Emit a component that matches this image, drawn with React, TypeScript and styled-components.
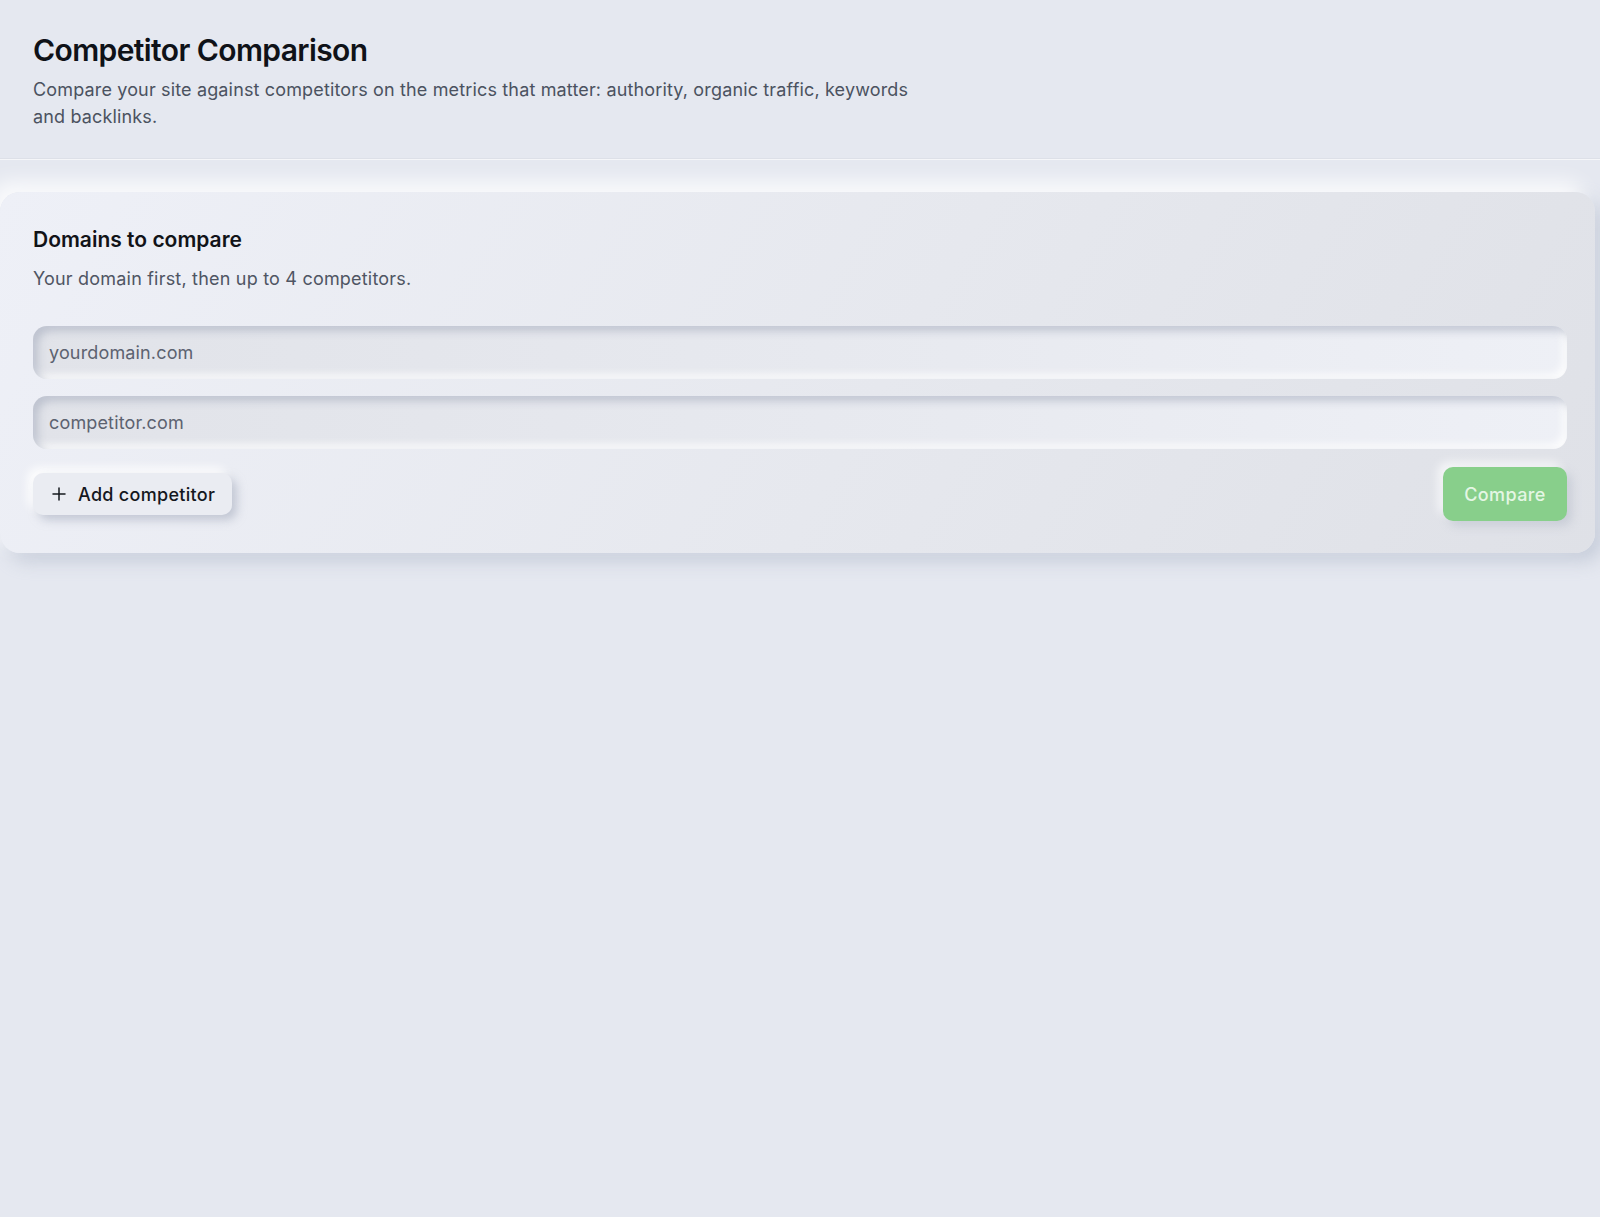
import styled, { createGlobalStyle } from "styled-components";

const GlobalStyle = createGlobalStyle`
  html, body {
    margin: 0;
    padding: 0;
    background: #e5e8f0;
    font-family: Inter, "Noto Sans", "Liberation Sans", sans-serif;
    color: #111827;
  }
  * {
    box-sizing: border-box;
  }
`;

const Plus = () => (
  <svg width="18" height="18" viewBox="0 0 24 24" fill="none" stroke="currentColor" strokeWidth="2" strokeLinecap="round">
    <path d="M12 4v16M4 12h16" />
  </svg>
);

export default function App() {
  return (
    <>
      <GlobalStyle />
      <Page>
        <Header>
          <Title>Competitor Comparison</Title>
          <Lead>
            Compare your site against competitors on the metrics that matter: authority, organic traffic, keywords
            and backlinks.
          </Lead>
        </Header>
        <Main>
          <Card>
            <CardTitle>Domains to compare</CardTitle>
            <CardText>Your domain first, then up to 4 competitors.</CardText>
            <Fields>
              <Field placeholder="yourdomain.com" />
              <Field placeholder="competitor.com" />
            </Fields>
            <Actions>
              <AddButton type="button">
                <Plus />
                Add competitor
              </AddButton>
              <CompareButton type="button" disabled>
                Compare
              </CompareButton>
            </Actions>
          </Card>
        </Main>
      </Page>
    </>
  );
}

const Page = styled.div`
  min-height: 1217px;
  background: #e5e8f0;
`;

const Header = styled.header`
  padding: 31px 32px 28px 33px;
  border-bottom: 1px solid #dde0e8;
  box-shadow: 0 1px 0 rgba(255, 255, 255, 0.6);
`;

const Title = styled.h1`
  margin: 0 0 7px;
  font-size: 30px;
  line-height: 38px;
  font-weight: 600;
  letter-spacing: -0.6px;
  color: #0f1218;
`;

const Lead = styled.p`
  margin: 0;
  max-width: 905px;
  font-size: 18px;
  line-height: 27px;
  letter-spacing: 0.15px;
  color: #4b5260;
`;

const Main = styled.main`
  padding: 33px 5px 32px 0;
`;

const Card = styled.section`
  padding: 33px 28px 32px 33px;
  border-radius: 20px;
  background: linear-gradient(120deg, #eef0f7 0%, #e6e8ee 55%, #dfe1e7 100%);
  box-shadow:
    -10px -10px 20px rgba(255, 255, 255, 0.85),
    8px 8px 18px rgba(160, 170, 190, 0.45);
`;

const CardTitle = styled.h2`
  margin: 0;
  font-size: 21px;
  line-height: 30px;
  font-weight: 600;
  color: #111318;
`;

const CardText = styled.p`
  margin: 11px 0 0;
  font-size: 18px;
  line-height: 26px;
  letter-spacing: 0.2px;
  color: #4f5563;
`;

const Fields = styled.div`
  display: flex;
  flex-direction: column;
  gap: 17px;
  margin-top: 34px;
`;

const Field = styled.input`
  width: 100%;
  height: 53px;
  padding: 0 16px;
  border: none;
  outline: none;
  border-radius: 14px;
  font-family: inherit;
  font-size: 18px;
  letter-spacing: 0.15px;
  color: #1f2937;
  background: linear-gradient(90deg, #e1e3e9 0%, #e8eaf0 60%, #eef0f6 100%);
  box-shadow:
    inset 5px 5px 8px rgba(160, 168, 186, 0.55),
    inset -4px -4px 8px rgba(255, 255, 255, 0.9);

  &::placeholder {
    color: #5c6270;
  }
`;

const Actions = styled.div`
  display: flex;
  align-items: center;
  justify-content: space-between;
  margin-top: 18px;
`;

const AddButton = styled.button`
  display: flex;
  align-items: center;
  gap: 10px;
  height: 42px;
  padding: 0 17px 0 17px;
  border: none;
  border-radius: 10px;
  font-family: inherit;
  font-size: 18px;
  font-weight: 500;
  letter-spacing: 0.3px;
  color: #15181e;
  background: #eaecf2;
  cursor: pointer;
  box-shadow:
    5px 5px 10px rgba(160, 168, 186, 0.55),
    -5px -5px 10px rgba(255, 255, 255, 0.95);
`;

const CompareButton = styled.button`
  width: 124px;
  height: 54px;
  border: none;
  border-radius: 10px;
  font-family: inherit;
  font-size: 18px;
  font-weight: 500;
  letter-spacing: 0.4px;
  color: #e4f6e4;
  background: #88cf8b;
  box-shadow:
    5px 5px 10px rgba(160, 168, 186, 0.35),
    -5px -5px 10px rgba(255, 255, 255, 0.7);
`;
